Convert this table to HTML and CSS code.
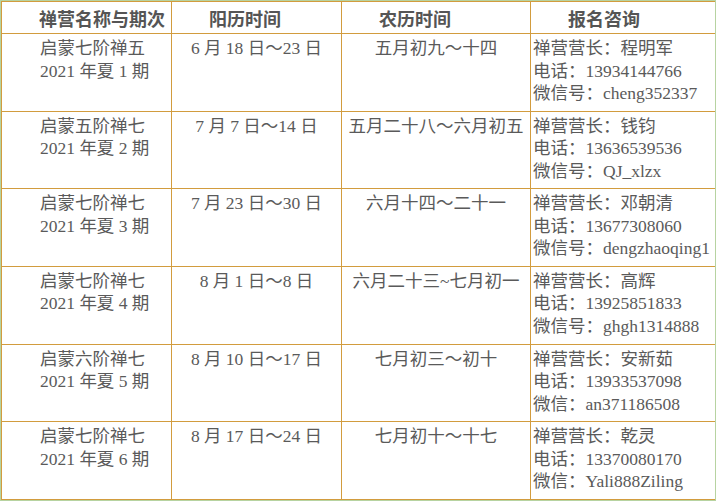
FILE: index.html
```html
<!DOCTYPE html>
<html lang="zh-CN">
<head>
<meta charset="utf-8">
<title>禅营</title>
<link rel="stylesheet" href="styles.css">
</head>
<body>
<div class="frame">
<table class="camp">
<colgroup>
<col class="c1"><col class="c2"><col class="c3"><col class="c4">
</colgroup>
<thead>
<tr><th>禅营名称与期次</th><th>阳历时间</th><th>农历时间</th><th>报名咨询</th></tr>
</thead>
<tbody>
<tr>
<td class="name">启蒙七阶禅五<br>2021 年夏 1 期</td>
<td class="mid">6 月 18 日～23 日</td>
<td class="mid">五月初九～十四</td>
<td class="info">禅营营长：程明军<br>电话：13934144766<br>微信号：cheng352337</td>
</tr>
<tr>
<td class="name">启蒙五阶禅七<br>2021 年夏 2 期</td>
<td class="mid">7 月 7 日～14 日</td>
<td class="mid">五月二十八～六月初五</td>
<td class="info">禅营营长：钱钧<br>电话：13636539536<br>微信号：QJ_xlzx</td>
</tr>
<tr>
<td class="name">启蒙七阶禅七<br>2021 年夏 3 期</td>
<td class="mid">7 月 23 日～30 日</td>
<td class="mid">六月十四～二十一</td>
<td class="info">禅营营长：邓朝清<br>电话：13677308060<br>微信号：dengzhaoqing1</td>
</tr>
<tr>
<td class="name">启蒙七阶禅七<br>2021 年夏 4 期</td>
<td class="mid">8 月 1 日～8 日</td>
<td class="mid">六月二十三~七月初一</td>
<td class="info">禅营营长：高辉<br>电话：13925851833<br>微信号：ghgh1314888</td>
</tr>
<tr>
<td class="name">启蒙六阶禅七<br>2021 年夏 5 期</td>
<td class="mid">8 月 10 日～17 日</td>
<td class="mid">七月初三～初十</td>
<td class="info">禅营营长：安新茹<br>电话：13933537098<br>微信：an371186508</td>
</tr>
<tr>
<td class="name">启蒙七阶禅七<br>2021 年夏 6 期</td>
<td class="mid">8 月 17 日～24 日</td>
<td class="mid">七月初十～十七</td>
<td class="info">禅营营长：乾灵<br>电话：13370080170<br>微信：Yali888Ziling</td>
</tr>
</tbody>
</table>
</div>
</body>
</html>
```

FILE: styles.css
```css
html, body {
  margin: 0;
  padding: 0;
  background: #ffffff;
}

.frame {
  width: 714px;
  height: 499px;
  border: 1px solid #b7d3a1;
  overflow: hidden;
}

.camp {
  width: 714px;
  border-collapse: collapse;
  table-layout: fixed;
  border: 1px solid #d29c3e;
  font-family: "Liberation Serif", "Noto Sans CJK SC", serif;
  font-size: 17.5px;
  color: #5a5a5a;
}

.c1 { width: 170px; }
.c2 { width: 170px; }
.c3 { width: 189px; }
.c4 { width: 185px; }

.camp th,
.camp td {
  border: 1px solid #d29c3e;
  vertical-align: top;
}

.camp th {
  height: 31px;
  padding: 0 0 0 37px;
  text-align: left;
  vertical-align: middle;
  font-family: "Noto Sans CJK SC", sans-serif;
  font-weight: bold;
  font-size: 18px;
  line-height: 22px;
  color: #555555;
}

.camp td {
  padding: 3px 2px 6.17px 2px;
  line-height: 22.5px;
  white-space: nowrap;
}

.camp td.name {
  padding-left: 38px;
  text-align: left;
}

.camp td.mid {
  text-align: center;
}

.camp td.info {
  text-align: left;
  overflow: visible;
}
```
